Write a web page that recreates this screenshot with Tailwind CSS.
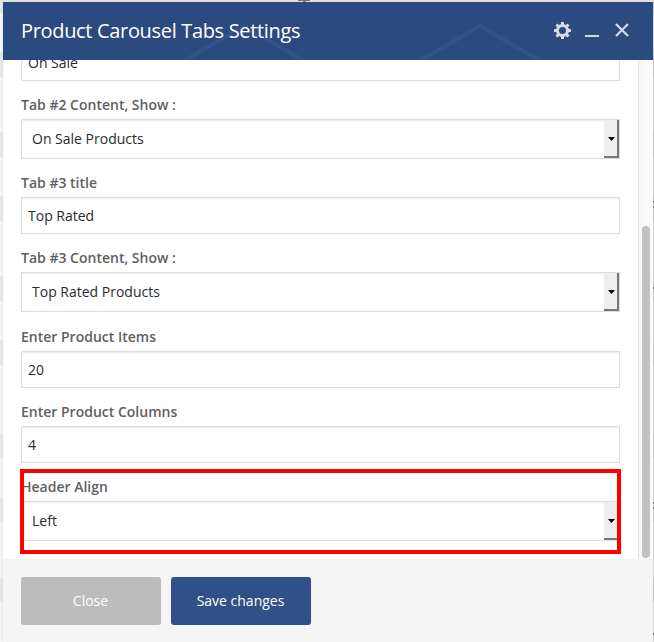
<!DOCTYPE html>
<html lang="en">
<head>
<meta charset="utf-8">
<title>Product Carousel Tabs Settings</title>
<script src="https://cdn.jsdelivr.net/npm/@tailwindcss/browser@4"></script>
</head>
<body class="relative h-[642px] w-[654px] overflow-hidden bg-[#f8f8f8] font-['Open_Sans','Noto_Sans',sans-serif] text-[14px] text-[#282c30]">
<!-- striped page behind the dialog -->
<div class="absolute inset-0">
  <div class="absolute top-0 h-[13px] w-full bg-[#eaeaea]"></div>
  <div class="absolute top-[52px] h-[25px] w-full bg-[#ebebeb]"></div>
  <div class="absolute top-[132px] h-[25px] w-full bg-[#ebebeb]"></div>
  <div class="absolute top-[196px] h-[25px] w-full bg-[#ebebeb]"></div>
  <div class="absolute top-[276px] h-[25px] w-full bg-[#ebebeb]"></div>
  <div class="absolute top-[340px] h-[25px] w-full bg-[#ebebeb]"></div>
  <div class="absolute top-[433px] h-[25px] w-full bg-[#ebebeb]"></div>
  <div class="absolute top-[497px] h-[25px] w-full bg-[#ebebeb]"></div>
  <div class="absolute top-[577px] h-[25px] w-full bg-[#ebebeb]"></div>
  <div class="absolute top-0 right-0 h-full w-px bg-black/10"></div>
  <div class="absolute top-0 left-[298px] h-px w-3 bg-[#777]"></div>
  <div class="absolute top-px left-[303px] h-px w-[3px] bg-[#888]"></div>
  <div class="absolute top-[201px] right-0 h-[7px] w-px border-y-2 border-[#777]"></div>
  <div class="absolute top-[287px] right-0 h-[2px] w-px bg-[#666]"></div>
  <div class="absolute top-[502px] right-0 h-[7px] w-px border-y-2 border-[#777]"></div>
  <div class="absolute top-[633px] right-0 h-[2px] w-px bg-[#666]"></div>
</div>

<div class="relative mt-[2px] ml-[3px] flex h-[640px] w-[650px] flex-col bg-white shadow-[0_0_4px_rgba(0,0,0,0.12)]">
  <header class="relative flex h-[58px] shrink-0 items-center overflow-hidden bg-[#2b4b80] pl-[18px]">
    <svg class="absolute inset-0" width="650" height="58" fill="none" stroke="#31528a" stroke-width="4"><path d="M179 60L241 24L303 60M415 60L477 24L539 60"/></svg>
    <h1 class="relative text-[20px] leading-[28px] tracking-[-0.330px] whitespace-nowrap text-white">Product Carousel Tabs Settings</h1>
    <svg class="absolute top-[18px] left-[550px]" width="20" height="20" viewBox="0 0 20 20" fill="#d5dbe6"><path fill-rule="evenodd" d="M18 12h-2.180c-.170.700-.440 1.350-.810 1.930l1.540 1.540-2.100 2.100-1.540-1.540c-.580.360-1.230.630-1.910.790V19H8v-2.180c-.680-.160-1.330-.430-1.910-.790l-1.540 1.540-2.120-2.120 1.540-1.540c-.360-.580-.630-1.230-.790-1.910H1V9.030h2.170c.160-.700.440-1.350.800-1.940L2.430 5.550l2.100-2.100 1.540 1.540c.580-.370 1.240-.640 1.930-.810V2h3v2.180c.680.160 1.330.430 1.910.790l1.540-1.540 2.120 2.120-1.540 1.540c.360.590.640 1.240.800 1.940H18V12zm-8.500 2a3.500 3.500 0 1 0 0-7 3.500 3.500 0 0 0 0 7z"/></svg>
    <div class="absolute top-[33px] left-[582px] h-[2px] w-[14px] bg-[#d5dbe6]"></div>
    <svg class="absolute top-[21px] left-[612px]" width="14" height="14" viewBox="0 0 14 14" stroke="#d5dbe6" stroke-width="2.200"><path d="M1 1L13 13M13 1L1 13"/></svg>
  </header>

  <div class="flex h-[499px] shrink-0 overflow-hidden">
    <main class="w-[635px] pr-[18px] pl-[18px]">
      <div class="-mt-[16px] flex h-[37px] w-[599px] items-center border border-[#ddd] pl-[6px]">On Sale</div>

      <label class="flex h-[38px] items-end pb-[5px] leading-[19px] font-semibold text-[#5f5f5f]">Tab #2 Content, Show :</label>
      <div class="flex h-[40px] w-[599px] border border-[#ddd] pl-[10px] shadow-[inset_0_1px_2px_rgba(0,0,0,0.07)]">
        <span class="flex-1 self-center pb-[2px]">On Sale Products</span>
        <span class="flex h-[38px] w-[15px] items-center justify-center border-r-2 border-b-2 border-[#777] bg-[#eee] pt-[2px] pl-[2px]"><svg class="shrink-0" width="7" height="4"><path d="M0 0H7L3.500 4Z"/></svg></span>
      </div>

      <label class="flex h-[38px] items-end pb-[5px] leading-[19px] font-semibold text-[#5f5f5f]">Tab #3 title</label>
      <div class="flex h-[37px] w-[599px] items-center border border-[#ddd] pl-[6px] shadow-[inset_0_1px_2px_rgba(0,0,0,0.07)]">Top Rated</div>

      <label class="flex h-[38px] items-end pb-[5px] leading-[19px] font-semibold text-[#5f5f5f]">Tab #3 Content, Show :</label>
      <div class="flex h-[40px] w-[599px] border border-[#ddd] pl-[10px] shadow-[inset_0_1px_2px_rgba(0,0,0,0.07)]">
        <span class="flex-1 self-center pb-[2px]">Top Rated Products</span>
        <span class="flex h-[38px] w-[15px] items-center justify-center border-r-2 border-b-2 border-[#777] bg-[#eee] pt-[2px] pl-[2px]"><svg class="shrink-0" width="7" height="4"><path d="M0 0H7L3.500 4Z"/></svg></span>
      </div>

      <label class="flex h-[39px] items-end pb-[5px] leading-[19px] font-semibold text-[#5f5f5f]">Enter Product Items</label>
      <div class="flex h-[37px] w-[599px] items-center border border-[#ddd] pl-[6px] shadow-[inset_0_1px_2px_rgba(0,0,0,0.07)]">20</div>

      <label class="flex h-[38px] items-end pb-[5px] leading-[19px] font-semibold text-[#5f5f5f]">Enter Product Columns</label>
      <div class="flex h-[37px] w-[599px] items-center border border-[#ddd] pl-[6px] shadow-[inset_0_1px_2px_rgba(0,0,0,0.07)]">4</div>

      <label class="flex h-[38px] items-end pb-[5px] leading-[19px] font-semibold text-[#5f5f5f]">Header Align</label>
      <div class="flex h-[40px] w-[599px] border border-[#ddd] pl-[10px] shadow-[inset_0_1px_2px_rgba(0,0,0,0.07)]">
        <span class="flex-1 self-center pb-[2px]">Left</span>
        <span class="flex h-[38px] w-[15px] items-center justify-center border-r-2 border-b-2 border-[#777] bg-[#eee] pt-[2px] pl-[2px]"><svg class="shrink-0" width="7" height="4"><path d="M0 0H7L3.500 4Z"/></svg></span>
      </div>
    </main>
    <div class="h-full w-[15px] border-l border-[#e4e4e4] bg-linear-to-r from-[#f5f5f5] to-[#fdfdfd] pt-[166px] pl-[3px]">
      <div class="h-[332px] w-[8px] rounded-full bg-[#c1c1c1]"></div>
    </div>
  </div>

  <footer class="flex flex-1 gap-[10px] bg-[#f5f5f5] pt-[18px] pl-[18px] text-white">
    <button class="h-[48px] w-[140px] rounded-[3px] bg-[#bcbcbc] pr-px pb-[2px]">Close</button>
    <button class="h-[48px] w-[140px] rounded-[3px] bg-[#305188] pr-px pb-[2px] font-medium">Save changes</button>
  </footer>
</div>

<!-- highlight around the last field -->
<div class="absolute top-[469px] left-[20px] h-[85px] w-[601px] border-4 border-[#f00]"></div>
</body>
</html>
